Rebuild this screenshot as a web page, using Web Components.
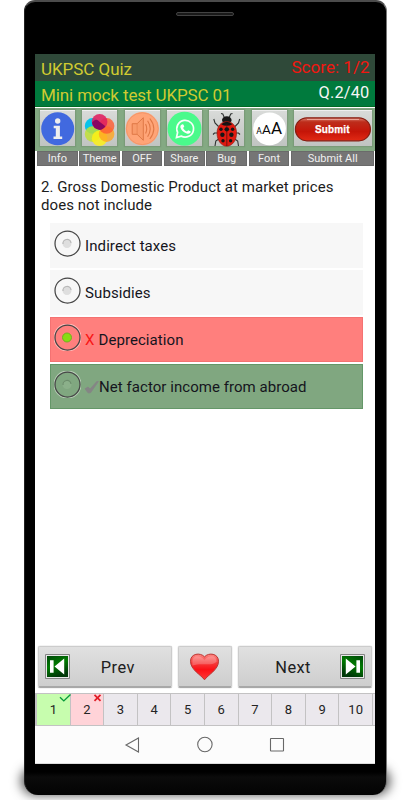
<!DOCTYPE html>
<html lang="en"><head><meta charset="utf-8"><title>UKPSC Quiz</title>
<style>html,body{margin:0;background:#fff;width:410px;height:800px;overflow:hidden;font-family:Roboto,sans-serif}</style></head>
<body><quiz-phone></quiz-phone>
<script>
const define=(name,html,setup)=>customElements.define(name,class extends HTMLElement{
  connectedCallback(){
    if(this.shadowRoot)return;
    this.attachShadow({mode:'open'}).innerHTML=html;
    if(setup)setup(this,this.shadowRoot);
  }
});

/* One line of text, spaced so that it spans the given width */
define('fit-text','<style>:host{display:inline-block;white-space:pre}span{display:inline-block}</style><span><slot></slot></span>',(el,r)=>{
  const fit=()=>{
    const s=r.querySelector('span'),n=el.textContent.length,w=+el.getAttribute('w');
    s.style.letterSpacing='0';
    const now=s.getBoundingClientRect().width;
    if(now){const d=(w-now)/n;s.style.letterSpacing=d+'px'}
  };
  fit();queueMicrotask(fit);
});

const icons={
info:`<svg viewBox="0 0 35 37"><circle cx="17.7" cy="18.8" r="16.5" fill="#4169df"/><g fill="#eee"><circle cx="17.7" cy="11" r="2.7"/><path d="M13.7 15.8h6.2v10.7h2.3v2.4h-8.7v-2.4h2.3v-8.3h-2.1z"/></g></svg>`,
theme:`<svg viewBox="0 0 35 37"><g><circle cx="10.6" cy="15.9" r="7.8" fill="#08c3ea"/><circle cx="10.6" cy="24.1" r="7.8" fill="#c0e036" fill-opacity=".85"/><circle cx="17.6" cy="28.2" r="7.8" fill="#fff112" fill-opacity=".82"/><circle cx="24.6" cy="24.1" r="7.8" fill="#ffa51f" fill-opacity=".8"/><circle cx="24.6" cy="15.9" r="7.8" fill="#ff5a30" fill-opacity=".8"/><circle cx="17.6" cy="11.8" r="7.8" fill="#e01f5e" fill-opacity=".88"/><path d="M10 12.8q3.6-5.4 7.6-1 5 3.7 5.7 4.5-3 4-5.7 3.7-6.7-1.2-7.6-7.2z" fill="#7c0060" fill-opacity=".85"/></g></svg>`,
sound:`<svg viewBox="0 0 35 37"><circle cx="17.3" cy="18.7" r="16.6" fill="#ffa477"/><circle cx="17.3" cy="18.7" r="15.9" fill="none" stroke="#ed9164" stroke-width=".7"/><g fill="none" stroke="#df7846" stroke-width="1"><path fill="#f99b6b" d="M7.2 13.7h4.9l6.2-6v22.6l-6.2-6H7.2z"/><path d="M12.1 14v10" stroke-width=".6"/><path d="M20.6 14q2.2 4.8 0 9.6M22.6 10.8q5.2 8 0 16M24.8 8.5q8 10.2 0 20.5" stroke-width="1.1"/></g></svg>`,
share:`<svg viewBox="0 0 35 37"><circle cx="17.5" cy="18.7" r="17" fill="#4afa8b"/><path d="M9.5 27.5l1.1-5.1a8.4 8.4 0 1 1 3.5 3.7z" fill="none" stroke="#f7fff9" stroke-width="1.7"/><path d="M14.4 14.7l1.2-.5c.5-.1.8.2 1 .7l.7 1.7-1.2 1.5c1 1.8 2.2 2.8 3.8 3.5l1.3-1.4 2.2 1.1c.5.3.2 1.1-.1 1.5-.9 1.1-2.2 1.3-3.6.8-3.1-1.1-5.2-3.1-6.2-5.8-.4-1.2 0-2.4.9-3.1z" fill="#fff"/></svg>`,
bug:`<svg viewBox="0 0 35 37"><g fill="none" stroke="#303432" stroke-width="1.1"><path d="M15.5 8l-1.7-4-1.8-.5M20 8l1.7-4 1.8-.5M9.5 16.5L6 13l-1.2-4M26 16.5l3.5-3.5 1.2-4M9 23H5.5L4 24.5M26 23h3.5l1.5 1.5M10.5 28.5l-3.7 2.5-.8 5M25 28.5l3.7 2.5.8 5"/></g><ellipse cx="17.8" cy="10" rx="4.8" ry="3.7" fill="#161716"/><path d="M17.8 11.5c6 0 9.8 5.2 9.8 11.5 0 7-4 13.2-9.8 13.2S8 30 8 23c0-6.3 3.8-11.5 9.8-11.5z" fill="#e11a10" stroke="#8a1b14" stroke-width=".6"/><path d="M12.2 14.3q5.6-5.3 11.2 0-2.5 1.5-5.6 1.5t-5.6-1.5z" fill="#141414"/><path d="M17.8 14.5V36" stroke="#5a140e" stroke-width=".8"/><g fill="#161616"><ellipse cx="17.8" cy="19.3" rx="2.3" ry="2.1"/><circle cx="12" cy="19.3" r="1.7"/><circle cx="23.6" cy="19.3" r="1.7"/><circle cx="13.4" cy="24.7" r="2.2"/><circle cx="22.4" cy="24.7" r="2.2"/><circle cx="14" cy="30.8" r="1.7"/><circle cx="21.6" cy="30.8" r="1.7"/></g></svg>`,
font:`<svg viewBox="0 0 35 37"><circle cx="17.5" cy="18.8" r="16.4" fill="#fff"/><g font-family="Roboto" fill="#080808"><text x="4.3" y="24" font-size="8.5">A</text><text x="10" y="24" font-size="13.5">A</text><text x="19" y="24" font-size="17">A</text></g></svg>`,
submit:`<svg viewBox="0 0 78 37"><defs><linearGradient id="r" x2="0" y2="1"><stop stop-color="#de8374"/><stop offset=".18" stop-color="#bd2d1b"/><stop offset=".6" stop-color="#c51508"/><stop offset="1" stop-color="#e22a15"/></linearGradient></defs><rect x="1.4" y="7.8" width="75" height="23" rx="11.5" fill="url(#r)" stroke="#871e12" stroke-width="1.2"/><path d="M13 9.5h52" stroke="#eba295" stroke-width="1"/><text x="21" y="22.8" font-family="Liberation Sans" font-weight="700" font-size="10" fill="#fff" stroke="#fff" stroke-width=".25" textLength="34.5">Submit</text></svg>`
};

define('tool-item',`<style>:host{display:grid;grid-template-rows:43px 13.3px;background:#84a983;min-width:0}
.cell{display:flex;justify-content:center;padding-top:1.5px}.btn{width:35px;height:36px;background:linear-gradient(#d9dbd9,#c0c4c1);box-shadow:0 0 1px 1px #6f8e6e80,inset 0 1px #eee}
:host([wide]) .btn{width:78px}svg{display:block;width:100%;height:37px}
label{background:#757575;border:1px solid #6a6a6a;box-sizing:border-box;color:#f0f0f0;font-size:11px;line-height:13px;text-align:center}
.under{background:#fff;padding:0 .8px;display:grid}</style><div class="cell"><div class="btn"></div></div><div class="under"><label><slot></slot></label></div>`,(el,r)=>{r.querySelector('.btn').innerHTML=icons[el.getAttribute('icon')]});

define('answer-option',`<style>:host{display:flex;align-items:center;box-sizing:border-box;height:45.1px;padding:0 0 3px 4.4px;background:#f7f7f7;font-size:15px;color:#15151d}
:host([state=wrong]){background:#ff7f7d;border:1px solid #f47272}:host([state=right]){background:#80a780;border:1px solid #649768}
:host([state]){padding-left:3.4px;padding-bottom:3.6px}
svg{width:27px;height:27px;margin-right:4px;flex:none}span{position:relative;top:2.2px;white-space:nowrap;display:flex;align-items:center}</style>
<svg viewBox="0 0 27 27"><circle class="halo" cx="13.5" cy="13.5" r="13.4" fill="none"/><circle cx="13.5" cy="13.5" r="12.5" fill="none" stroke="#464646" stroke-width="1.25"/><circle class="dot" cx="13" cy="13.5" r="4.5" fill="#dedede"/><path class="arc" d="M9 14a4 4 0 0 1 8-1" fill="none" stroke="#b8b8b8" stroke-width="1.2"/></svg><span><slot></slot></span>`,(el,r)=>{
 const s=el.getAttribute('state'),d=r.querySelector('.dot'),h=r.querySelector('.halo');
 if(s){h.setAttribute('stroke',s=='wrong'?'#ffb8b6':'#b6cdb5');h.setAttribute('stroke-width','1.3')}
 if(s=='wrong'){d.setAttribute('fill','#87dc13');d.setAttribute('stroke','#73af22');r.querySelector('.arc').remove()}
 if(s=='right'){d.setAttribute('fill','#8bb08a');r.querySelector('.arc').setAttribute('stroke','#6c8d6c')}
});

define('nav-button',`<style>:host{display:flex;box-sizing:border-box;align-items:center;height:42px;padding-top:1px;background:linear-gradient(#e0e0e0,#cecece);border:1px solid #ccc;border-bottom:2px solid #a8a8a8;border-radius:2px;box-shadow:0 0 1px #888;color:#202020;font-size:16.4px}</style><slot></slot>`);
define('skip-icon',`<style>:host{display:block;width:25px;height:25px;margin-top:-1px}svg{display:block}:host([next]) svg{transform:scaleX(-1)}</style><svg width="25" height="25"><defs><linearGradient id="g" x2=".4" y2="1"><stop stop-color="#00480a"/><stop offset=".5" stop-color="#007a00"/><stop offset="1" stop-color="#003908"/></linearGradient></defs><path fill="#e8e8e8" stroke="#858585" d="M.5.5h24v24H.5z"/><path fill="url(#g)" d="M2 2h21v21H2z"/><path fill="#fff" d="M5 6.2h3.6v12.6H5zM19.2 4.5v16l-9.7-8z"/></svg>`);
define('heart-icon',`<style>:host,svg{display:block}:host{margin:-1px 1px 0 0}</style><svg width="31" height="29" viewBox="0 0 31 30"><defs><linearGradient id="h" x2="0" y2="1"><stop stop-color="#ff8985"/><stop offset=".35" stop-color="#f53a3a"/><stop offset=".6" stop-color="#fb1015"/><stop offset="1" stop-color="#ff3938"/></linearGradient></defs><path d="M15.5 28.8C12 23.7 1 18.5 1 9.6 1 1.5 11 .1 15.5 5 20 .1 30 1.5 30 9.6c0 8.9-11 14.1-14.5 19.2z" fill="url(#h)" stroke="#b63431"/><path d="M3 10C3 3.3 10.3 2.6 15.5 8 20.8 2.5 28 3.5 28 10c-6.8 5.5-15 .5-25 4z" fill="#fff" opacity=".22"/></svg>`);

define('page-cell',`<style>:host{display:block;position:relative;box-sizing:border-box;width:33.6px;flex:none;height:32.5px;border:solid #c3c2c3;border-width:1px 1.5px 1px 0;background:#ebe8ed;text-align:center;font-size:13px;line-height:32px;color:#242424}:host([state=ok]){background:#c7fdae}:host([state=bad]){background:#ffd3d8}svg{position:absolute;right:-1px;top:-1px}</style><slot></slot><svg width="12" height="10"></svg>`,(el,r)=>{
 const s=el.getAttribute('state'),v=r.querySelector('svg');
 if(s=='ok')v.innerHTML='<path d="M1 4.3l3.8 3.6L11.5 1.5" fill="none" stroke="#079b3b" stroke-width="1.4"/>';
 else if(s=='bad')v.innerHTML='<path d="M2.5 1.8l6 6M8.5 1.8l-6 6" stroke="#e01c26" stroke-width="1.7"/>';
 else v.remove();
});

define('quiz-screen',`<style>
:host{display:flex;flex-direction:column;width:340px;height:710px;background:#fff;overflow:hidden}
header,.sub{display:flex;justify-content:space-between;padding:0 5.5px 0 6px;color:#d0cb31;font-size:17px;box-sizing:border-box}
header{height:27px;background:#2f4939;line-height:31px}.sub{height:26px;background:#007a3d;line-height:29px;border-bottom:1px solid #006b22}
header>:last-child{color:#f21610;line-height:26px}.sub>:last-child{color:#f5f5f5;line-height:24px;font-size:16.4px}
.tools{display:grid;grid-template-columns:repeat(6,42.35px) 1fr;height:56.3px;margin-top:1px;padding:0 0 0 1.2px;background:linear-gradient(#84a983 43px,#fff 43px)}
.q{padding:14.8px 0 0 6px;font-size:15px;line-height:17.5px;color:#1c1c1c;height:58.5px;box-sizing:border-box}
.answers{display:grid;gap:2px;margin:0 11.6px 0 14.7px}
.fill{flex:1}.nav{display:grid;grid-template-columns:134px 54px 134px;gap:6px;padding:0 0 5px 3.3px}
.prev{padding-left:6px;gap:30.5px}.next{padding-left:36px;gap:29.5px}.heart{justify-content:center}
.pages{display:flex;overflow:hidden;height:32.5px;border-left:2px solid #c3c2c3}
.system{height:38.5px;background:#fcfcfc;border-bottom:1px solid #ddd;box-sizing:border-box}.system svg{display:block}
.x{color:#f81616;margin-right:4px}.tick{width:14px;height:14px;overflow:visible}
</style>
<header><fit-text w="91">UKPSC Quiz</fit-text><fit-text w="78">Score: 1/2</fit-text></header>
<div class="sub"><fit-text w="190.5">Mini mock test UKPSC 01</fit-text><fit-text w="51">Q.2/40</fit-text></div>
<div class="tools"><tool-item icon="info">Info</tool-item><tool-item icon="theme">Theme</tool-item><tool-item icon="sound">OFF</tool-item><tool-item icon="share">Share</tool-item><tool-item icon="bug">Bug</tool-item><tool-item icon="font">Font</tool-item><tool-item wide icon="submit">Submit All</tool-item></div>
<div class="q"><fit-text w="292.5">2. Gross Domestic Product at market prices</fit-text><br><fit-text w="111">does not include</fit-text></div>
<div class="answers"><answer-option><fit-text w="91">Indirect taxes</fit-text></answer-option><answer-option><fit-text w="65.5">Subsidies</fit-text></answer-option><answer-option state="wrong"><span class="x">X</span><fit-text w="85">Depreciation</fit-text></answer-option><answer-option state="right"><svg class="tick" viewBox="0 0 14 14"><path d="M0 8.8l3-1.8 2.1 2L11.8 1.5h1.6L5.5 12.8H3z" fill="#858585" stroke="#858585" stroke-width=".8"/></svg><fit-text w="207.5">Net factor income from abroad</fit-text></answer-option></div>
<div class="fill"></div>
<div class="nav"><nav-button class="prev"><skip-icon></skip-icon><fit-text w="34">Prev</fit-text></nav-button><nav-button class="heart"><heart-icon></heart-icon></nav-button><nav-button class="next"><fit-text w="35.5">Next</fit-text><skip-icon next></skip-icon></nav-button></div>
<div class="pages"><page-cell state="ok">1</page-cell><page-cell state="bad">2</page-cell><page-cell>3</page-cell><page-cell>4</page-cell><page-cell>5</page-cell><page-cell>6</page-cell><page-cell>7</page-cell><page-cell>8</page-cell><page-cell>9</page-cell><page-cell>10</page-cell><page-cell></page-cell></div>
<div class="system"><svg width="340" height="37"><g fill="none" stroke="#686868" stroke-width="1.1"><path d="M103.5 12v14l-12.5-7z"/><circle cx="169.9" cy="18.5" r="7.2"/><rect x="235.5" y="12.5" width="13" height="12.5" rx=".5"/></g></svg></div>`);

define('quiz-phone',`<style>:host{display:block;position:relative;isolation:isolate;width:410px;height:800px;overflow:hidden}
.body{box-sizing:border-box;width:363px;height:795px;margin-left:24px;background:linear-gradient(#000 770px,#0b0b0b 775px,#030303);border-top:2px solid #4b4b4b;border-right:1px solid #777;border-left:1px solid #222;border-radius:11px 11px 14px 14px;padding:10px 0 0 10px}
.ear{width:58px;height:4px;box-sizing:border-box;border:1px solid #424242;border-radius:2px;background:#191919;margin:0 0 38px 141px}
.floor{position:absolute;z-index:-1;left:26px;top:772px;width:359px;height:18px;background:#555;border-radius:10px;box-shadow:0 0 11px 5px #555}</style><div class="floor"></div><div class="body"><div class="ear"></div><quiz-screen></quiz-screen></div>`);
</script></body></html>
